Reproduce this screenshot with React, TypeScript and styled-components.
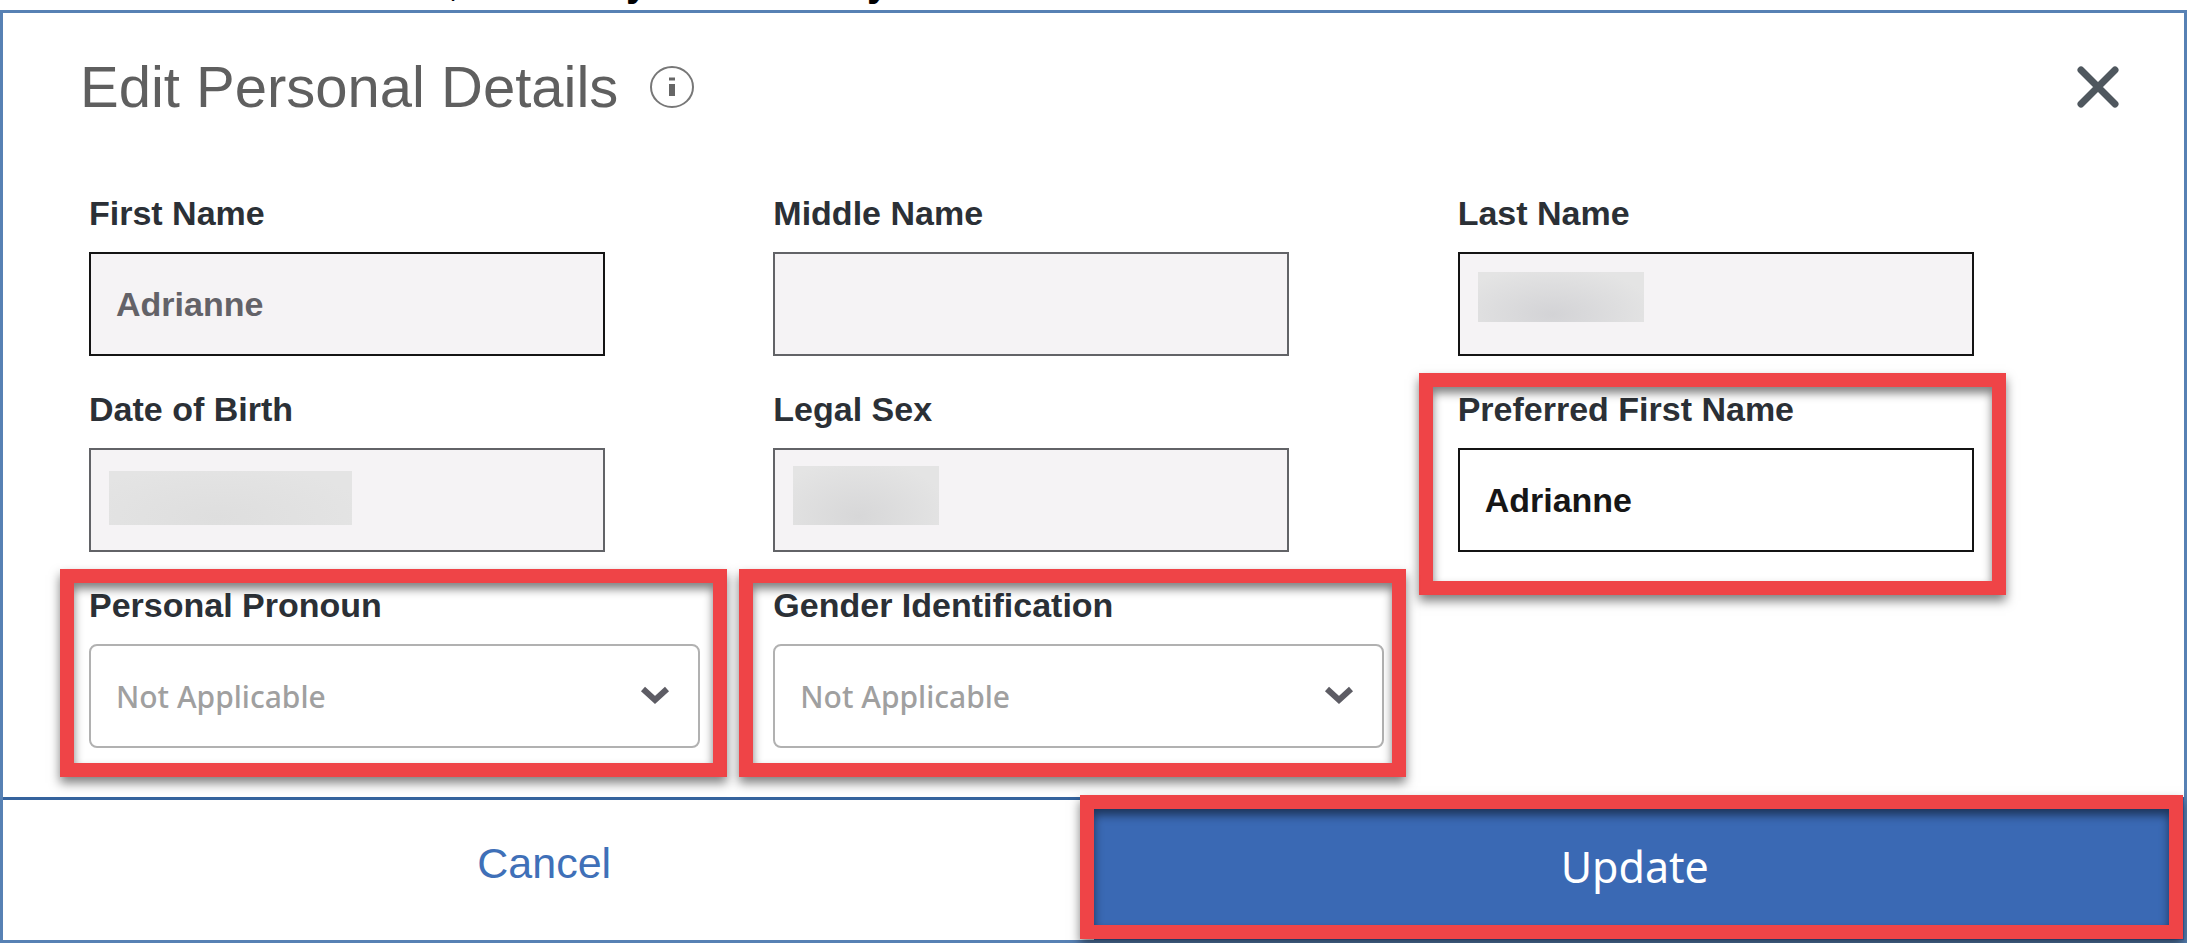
import React from "react";
import styled, { createGlobalStyle, css } from "styled-components";

const SANS = '"Liberation Sans", Arial, sans-serif';
const HUMANIST = '"Noto Sans", "Open Sans", sans-serif';

const GlobalStyle = createGlobalStyle`
  *, *::before, *::after { box-sizing: border-box; }
  body { margin: 0; background: #fff; font-family: ${SANS}; }
  button, input, select { font: inherit; }
`;

const Page = styled.div`
  width: 100%;
`;

const Caption = styled.div`
  display: flex;
  height: 10px;
  padding-left: 448px;
  overflow: hidden;
  font-size: 40px;
  line-height: 20px;
  color: #000;
`;

const CaptionPart = styled.span<{ $width: number; $bold?: boolean }>`
  width: ${(p) => p.$width}px;
  margin-top: -28px;
  font-weight: ${(p) => (p.$bold ? 700 : 400)};
`;

const Dialog = styled.form`
  display: flex;
  flex-direction: column;
  border: 3px solid #5781b4;
  background: #fff;
`;

const Header = styled.header`
  display: flex;
  align-items: center;
  height: 148px;
  padding: 0 63px 0 77px;
`;

const Title = styled.h1`
  margin: 0;
  font-size: 58px;
  line-height: 66px;
  font-weight: 400;
  color: #5f5f5f;
`;

const IconButton = styled.button<{ $end?: boolean }>`
  display: flex;
  margin: 0 0 0 ${(p) => (p.$end ? "auto" : "32px")};
  padding: 0;
  border: 0;
  background: none;
`;

const Fields = styled.div`
  display: grid;
  grid-template-columns: repeat(3, minmax(0, 1fr));
  row-gap: 16px;
  padding: 27px 42px 37px 86px;
`;

const Field = styled.div`
  position: relative;
  display: flex;
  flex-direction: column;
  height: 180px;
`;

const Label = styled.label`
  height: 64px;
  padding-top: 5px;
  font-size: 34px;
  line-height: 40px;
  font-weight: 700;
  color: #2b3036;
`;

const control = css`
  height: 104px;
  padding: 0 25px;
  font-size: 34px;
  outline: 0;
`;

const TextBox = styled.input<{ $dark?: boolean }>`
  ${control}
  width: 516px;
  border: 2px solid ${(p) => (p.$dark ? "#141414" : "#626367")};
  border-radius: 0;
  background: ${(p) => (p.readOnly ? "#f5f3f5" : "#fff")};
  color: ${(p) => (p.readOnly ? "#636268" : "#161616")};
  font-weight: 700;
`;

const SelectWrap = styled.div`
  display: flex;
  align-items: center;
  width: 611px;
`;

const Select = styled.select`
  ${control}
  flex: 1;
  appearance: none;
  border: 2px solid #b1b1b1;
  border-radius: 8px;
  background: #fff;
  font-family: ${HUMANIST};
  font-size: 30px;
  font-weight: 500;
  color: #a0a0a0;
  opacity: 1;
`;

const Chevron = styled.svg`
  width: 30px;
  height: 20px;
  margin: 0 30px 0 -60px;
  pointer-events: none;
`;

const Redaction = styled.span<{ $top: number; $width: number; $height: number; $tone: string }>`
  position: absolute;
  left: 20px;
  top: ${(p) => p.$top}px;
  width: ${(p) => p.$width}px;
  height: ${(p) => p.$height}px;
  background: radial-gradient(ellipse at 45% 85%, ${(p) => p.$tone}, #e4e4e4 80%);
`;

const highlight = css`
  position: absolute;
  border: 14px solid #ef4447;
  pointer-events: none;
  box-shadow:
    0 6px 10px rgba(0, 0, 0, 0.5),
    inset 0 6px 10px rgba(0, 0, 0, 0.5);
`;

const FieldHighlight = styled.span<{ $outset: number; $wide?: boolean }>`
  ${highlight}
  left: ${(p) => -p.$outset}px;
  top: -11px;
  width: ${(p) => (p.$wide ? 667 : 587)}px;
  height: ${(p) => (p.$wide ? 208 : 222)}px;
`;

const Footer = styled.footer`
  display: grid;
  grid-template-columns: 1fr 1fr;
  border-top: 3px solid #35639d;
`;

const Action = styled.button<{ $primary?: boolean }>`
  position: relative;
  height: 140px;
  padding: ${(p) => (p.$primary ? "0 8px 8px 0" : "0 8px 14px 0")};
  border: 0;
  background: ${(p) => (p.$primary ? "#3a69b4" : "#fff")};
  color: ${(p) => (p.$primary ? "#fff" : "#3f70b8")};
  font-family: ${(p) => (p.$primary ? HUMANIST : SANS)};
  font-size: 43px;
`;

const ActionHighlight = styled.span`
  ${highlight}
  inset: -5px 1px 1px -14px;
`;

type Redacted = { top: number; width: number; height: number; tone: string };

type FieldSpec = {
  id: string;
  label: string;
  value?: string;
  dark?: boolean;
  editable?: boolean;
  select?: boolean;
  redacted?: Redacted;
  outset?: number;
};

const fields: FieldSpec[] = [
  { id: "first", label: "First Name", value: "Adrianne", dark: true },
  { id: "middle", label: "Middle Name" },
  {
    id: "last",
    label: "Last Name",
    dark: true,
    redacted: { top: 84, width: 166, height: 50, tone: "#d3d3d6" },
  },
  {
    id: "dob",
    label: "Date of Birth",
    redacted: { top: 87, width: 243, height: 54, tone: "#dedede" },
  },
  {
    id: "sex",
    label: "Legal Sex",
    redacted: { top: 82, width: 146, height: 59, tone: "#d7d7d8" },
  },
  {
    id: "preferred",
    label: "Preferred First Name",
    value: "Adrianne",
    dark: true,
    editable: true,
    outset: 39,
  },
  { id: "pronoun", label: "Personal Pronoun", select: true, outset: 29 },
  { id: "gender", label: "Gender Identification", select: true, outset: 34 },
];

function FormField({ spec }: { spec: FieldSpec }) {
  return (
    <Field>
      <Label htmlFor={spec.id}>{spec.label}</Label>
      {spec.select ? (
        <SelectWrap>
          <Select id={spec.id}>
            <option>Not Applicable</option>
          </Select>
          <Chevron viewBox="0 0 30 20" aria-hidden="true">
            <path d="M3 3 L15 14 L27 3" fill="none" stroke="#5d5c64" strokeWidth="6" />
          </Chevron>
        </SelectWrap>
      ) : (
        <TextBox
          id={spec.id}
          type="text"
          defaultValue={spec.value ?? ""}
          readOnly={!spec.editable}
          $dark={spec.dark}
        />
      )}
      {spec.redacted && (
        <Redaction
          $top={spec.redacted.top}
          $width={spec.redacted.width}
          $height={spec.redacted.height}
          $tone={spec.redacted.tone}
        />
      )}
      {spec.outset && <FieldHighlight $outset={spec.outset} $wide={spec.select} />}
    </Field>
  );
}

export default function App() {
  return (
    <>
      <GlobalStyle />
      <Page>
        <Caption aria-hidden="true">
          <CaptionPart $width={178}>,</CaptionPart>
          <CaptionPart $width={241} $bold>y</CaptionPart>
          <CaptionPart $width={40} $bold>y</CaptionPart>
        </Caption>
        <Dialog onSubmit={(e) => e.preventDefault()}>
          <Header>
            <Title>Edit Personal Details</Title>
            <IconButton type="button" aria-label="About personal details">
              <svg width="44" height="42" viewBox="0 0 44 42" fill="none">
                <ellipse cx="22" cy="21" rx="21" ry="20" stroke="#777" strokeWidth="2" />
                <path d="M19 13h6" stroke="#666" strokeWidth="3" />
                <path d="M22 18v12" stroke="#666" strokeWidth="6" />
              </svg>
            </IconButton>
            <IconButton type="button" aria-label="Close" $end>
              <svg width="44" height="42" viewBox="0 0 44 42" fill="none">
                <path
                  d="M4 4 L38 38 M38 4 L4 38"
                  stroke="#4f575e"
                  strokeWidth="7"
                  strokeLinecap="round"
                />
              </svg>
            </IconButton>
          </Header>
          <Fields>
            {fields.map((f) => (
              <FormField key={f.id} spec={f} />
            ))}
          </Fields>
          <Footer>
            <Action type="button">Cancel</Action>
            <Action type="submit" $primary>
              Update
              <ActionHighlight />
            </Action>
          </Footer>
        </Dialog>
      </Page>
    </>
  );
}
